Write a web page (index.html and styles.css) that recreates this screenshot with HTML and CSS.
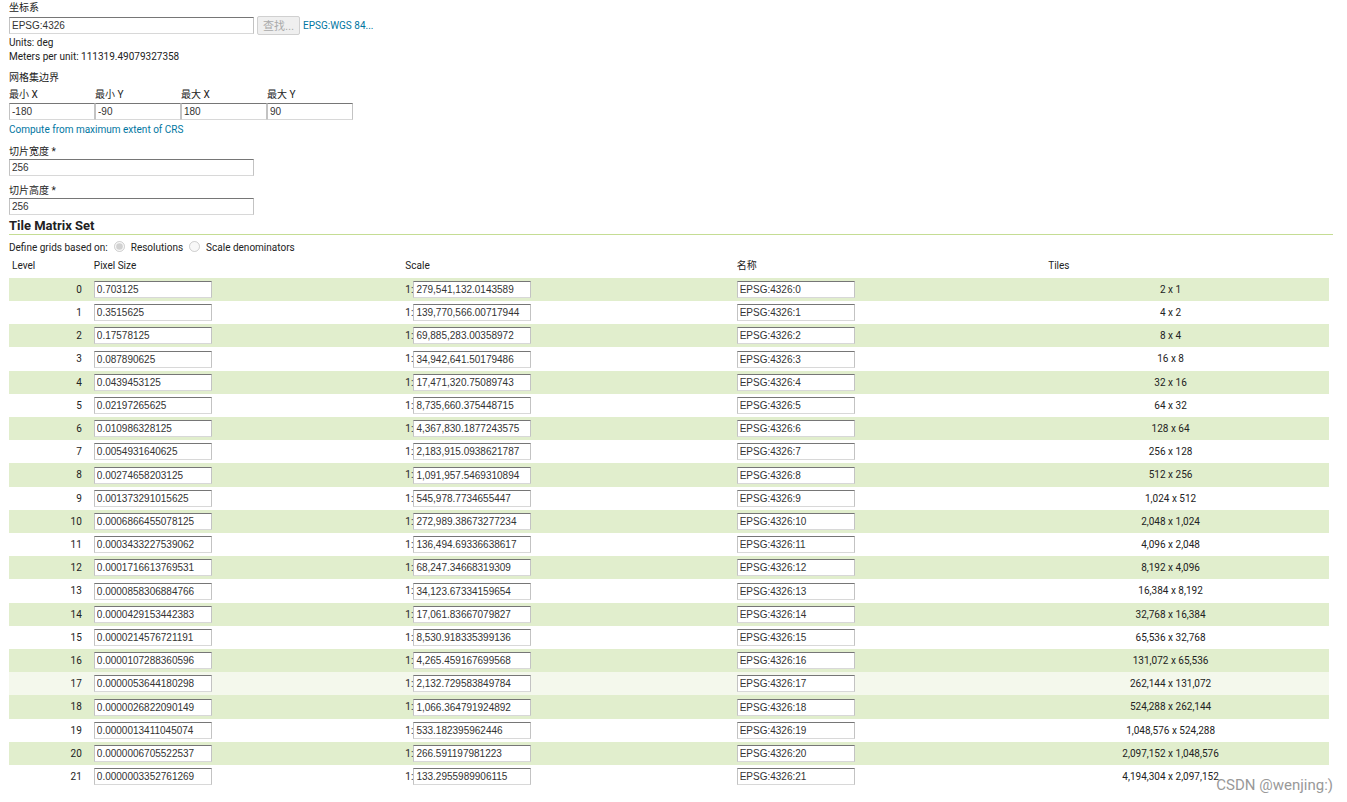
FILE: index.html
```html
<!DOCTYPE html>
<html lang="zh-CN">
<head>
<meta charset="utf-8">
<title>Tile Matrix Set</title>
<link rel="stylesheet" href="styles.css">
</head>
<body>
<form class="gridset">
  <section class="crs">
    <label class="caption" for="crs">坐标系</label>
    <div class="crs-row">
      <input class="field wide" id="crs" type="text" value="EPSG:4326">
      <button class="find" type="button" disabled>查找...</button>
      <a class="link" href="#">EPSG:WGS 84...</a>
    </div>
    <p class="info">Units: deg</p>
    <p class="info">Meters per unit: 111319.49079327358</p>
  </section>
  <fieldset class="bounds">
    <legend class="caption">网格集边界</legend>
    <div class="bounds-row">
      <label class="bound">最小 X<input class="field" type="text" value="-180"></label>
      <label class="bound">最小 Y<input class="field" type="text" value="-90"></label>
      <label class="bound">最大 X<input class="field" type="text" value="180"></label>
      <label class="bound">最大 Y<input class="field" type="text" value="90"></label>
    </div>
    <a class="link compute" href="#">Compute from maximum extent of CRS</a>
  </fieldset>
  <div class="tile-size">
    <label class="caption" for="tw">切片宽度 *</label>
    <input class="field wide" id="tw" type="text" value="256">
  </div>
  <div class="tile-size">
    <label class="caption" for="th">切片高度 *</label>
    <input class="field wide" id="th" type="text" value="256">
  </div>
  <h2 class="title">Tile Matrix Set</h2>
  <div class="basis">
    <span>Define grids based on:</span>
    <input class="radio" id="res" type="radio" name="basis" checked disabled><label for="res">Resolutions</label>
    <input class="radio" id="den" type="radio" name="basis" disabled><label for="den">Scale denominators</label>
  </div>
  <table class="levels">
    <colgroup><col class="c-level"><col class="c-pixel"><col class="c-scale"><col class="c-name"><col class="c-tiles"><col></colgroup>
    <thead>
      <tr><th>Level</th><th>Pixel Size</th><th>Scale</th><th>名称</th><th>Tiles</th><th></th></tr>
    </thead>
    <tbody>
      <tr><td>0</td><td><input class="field" aria-label="Pixel Size" value="0.703125"></td><td><label class="scale">1:<input class="field" value="279,541,132.0143589"></label></td><td><input class="field" aria-label="名称" value="EPSG:4326:0"></td><td>2 x 1</td><td></td></tr>
      <tr><td>1</td><td><input class="field" aria-label="Pixel Size" value="0.3515625"></td><td><label class="scale">1:<input class="field" value="139,770,566.00717944"></label></td><td><input class="field" aria-label="名称" value="EPSG:4326:1"></td><td>4 x 2</td><td></td></tr>
      <tr><td>2</td><td><input class="field" aria-label="Pixel Size" value="0.17578125"></td><td><label class="scale">1:<input class="field" value="69,885,283.00358972"></label></td><td><input class="field" aria-label="名称" value="EPSG:4326:2"></td><td>8 x 4</td><td></td></tr>
      <tr><td>3</td><td><input class="field" aria-label="Pixel Size" value="0.087890625"></td><td><label class="scale">1:<input class="field" value="34,942,641.50179486"></label></td><td><input class="field" aria-label="名称" value="EPSG:4326:3"></td><td>16 x 8</td><td></td></tr>
      <tr><td>4</td><td><input class="field" aria-label="Pixel Size" value="0.0439453125"></td><td><label class="scale">1:<input class="field" value="17,471,320.75089743"></label></td><td><input class="field" aria-label="名称" value="EPSG:4326:4"></td><td>32 x 16</td><td></td></tr>
      <tr><td>5</td><td><input class="field" aria-label="Pixel Size" value="0.02197265625"></td><td><label class="scale">1:<input class="field" value="8,735,660.375448715"></label></td><td><input class="field" aria-label="名称" value="EPSG:4326:5"></td><td>64 x 32</td><td></td></tr>
      <tr><td>6</td><td><input class="field" aria-label="Pixel Size" value="0.010986328125"></td><td><label class="scale">1:<input class="field" value="4,367,830.1877243575"></label></td><td><input class="field" aria-label="名称" value="EPSG:4326:6"></td><td>128 x 64</td><td></td></tr>
      <tr><td>7</td><td><input class="field" aria-label="Pixel Size" value="0.0054931640625"></td><td><label class="scale">1:<input class="field" value="2,183,915.0938621787"></label></td><td><input class="field" aria-label="名称" value="EPSG:4326:7"></td><td>256 x 128</td><td></td></tr>
      <tr><td>8</td><td><input class="field" aria-label="Pixel Size" value="0.00274658203125"></td><td><label class="scale">1:<input class="field" value="1,091,957.5469310894"></label></td><td><input class="field" aria-label="名称" value="EPSG:4326:8"></td><td>512 x 256</td><td></td></tr>
      <tr><td>9</td><td><input class="field" aria-label="Pixel Size" value="0.001373291015625"></td><td><label class="scale">1:<input class="field" value="545,978.7734655447"></label></td><td><input class="field" aria-label="名称" value="EPSG:4326:9"></td><td>1,024 x 512</td><td></td></tr>
      <tr><td>10</td><td><input class="field" aria-label="Pixel Size" value="0.0006866455078125"></td><td><label class="scale">1:<input class="field" value="272,989.38673277234"></label></td><td><input class="field" aria-label="名称" value="EPSG:4326:10"></td><td>2,048 x 1,024</td><td></td></tr>
      <tr><td>11</td><td><input class="field" aria-label="Pixel Size" value="0.0003433227539062"></td><td><label class="scale">1:<input class="field" value="136,494.69336638617"></label></td><td><input class="field" aria-label="名称" value="EPSG:4326:11"></td><td>4,096 x 2,048</td><td></td></tr>
      <tr><td>12</td><td><input class="field" aria-label="Pixel Size" value="0.0001716613769531"></td><td><label class="scale">1:<input class="field" value="68,247.34668319309"></label></td><td><input class="field" aria-label="名称" value="EPSG:4326:12"></td><td>8,192 x 4,096</td><td></td></tr>
      <tr><td>13</td><td><input class="field" aria-label="Pixel Size" value="0.0000858306884766"></td><td><label class="scale">1:<input class="field" value="34,123.67334159654"></label></td><td><input class="field" aria-label="名称" value="EPSG:4326:13"></td><td>16,384 x 8,192</td><td></td></tr>
      <tr><td>14</td><td><input class="field" aria-label="Pixel Size" value="0.0000429153442383"></td><td><label class="scale">1:<input class="field" value="17,061.83667079827"></label></td><td><input class="field" aria-label="名称" value="EPSG:4326:14"></td><td>32,768 x 16,384</td><td></td></tr>
      <tr><td>15</td><td><input class="field" aria-label="Pixel Size" value="0.0000214576721191"></td><td><label class="scale">1:<input class="field" value="8,530.918335399136"></label></td><td><input class="field" aria-label="名称" value="EPSG:4326:15"></td><td>65,536 x 32,768</td><td></td></tr>
      <tr><td>16</td><td><input class="field" aria-label="Pixel Size" value="0.0000107288360596"></td><td><label class="scale">1:<input class="field" value="4,265.459167699568"></label></td><td><input class="field" aria-label="名称" value="EPSG:4326:16"></td><td>131,072 x 65,536</td><td></td></tr>
      <tr class="active"><td>17</td><td><input class="field" aria-label="Pixel Size" value="0.0000053644180298"></td><td><label class="scale">1:<input class="field" value="2,132.729583849784"></label></td><td><input class="field" aria-label="名称" value="EPSG:4326:17"></td><td>262,144 x 131,072</td><td></td></tr>
      <tr><td>18</td><td><input class="field" aria-label="Pixel Size" value="0.0000026822090149"></td><td><label class="scale">1:<input class="field" value="1,066.364791924892"></label></td><td><input class="field" aria-label="名称" value="EPSG:4326:18"></td><td>524,288 x 262,144</td><td></td></tr>
      <tr><td>19</td><td><input class="field" aria-label="Pixel Size" value="0.0000013411045074"></td><td><label class="scale">1:<input class="field" value="533.182395962446"></label></td><td><input class="field" aria-label="名称" value="EPSG:4326:19"></td><td>1,048,576 x 524,288</td><td></td></tr>
      <tr><td>20</td><td><input class="field" aria-label="Pixel Size" value="0.0000006705522537"></td><td><label class="scale">1:<input class="field" value="266.591197981223"></label></td><td><input class="field" aria-label="名称" value="EPSG:4326:20"></td><td>2,097,152 x 1,048,576</td><td></td></tr>
      <tr><td>21</td><td><input class="field" aria-label="Pixel Size" value="0.0000003352761269"></td><td><label class="scale">1:<input class="field" value="133.2955989906115"></label></td><td><input class="field" aria-label="名称" value="EPSG:4326:21"></td><td>4,194,304 x 2,097,152</td><td></td></tr>
    </tbody>
  </table>
</form>
<div class="watermark">CSDN @wenjing:)</div>
</body>
</html>
```
FILE: styles.css
```css
* { box-sizing: border-box; }
body {
  margin: 0;
  background: #fff;
  color: #222;
  font: 10px/14px Tahoma, Roboto, "Noto Sans CJK SC", sans-serif;
}
.gridset { padding: 0 14px 0 9px; }
.caption { display: block; padding: 0; }
.field {
  width: 118px;
  height: 17px;
  margin: 0;
  padding: 0 2px;
  border: 1px solid #c3c3c3;
  border-top-color: #767676;
  border-bottom-color: #d8d8d8;
  background: #fff;
  color: #333;
  font: 10px "Liberation Sans", Arial, sans-serif;
}
.wide { display: block; width: 245px; }
.link { color: #0076a1; text-decoration: none; }
.info { margin: 0; }
.crs { padding-top: 1px; }
.crs-row { display: flex; align-items: center; gap: 3px; height: 21px; }
.find {
  width: 43px;
  height: 19px;
  padding: 0;
  border: 1px solid #d0d0d0;
  border-radius: 2px;
  background: #efefef;
  color: #aaa;
  font: 11px/14px "Liberation Sans", "Noto Sans CJK SC", sans-serif;
}
.bounds { margin: 7px 0 0; padding: 0; border: 0; }
.bounds-row { display: flex; padding-top: 3px; }
.bound { display: flex; flex-direction: column; gap: 1px; width: 86px; }
.bound .field { width: 100%; }
.compute { display: block; margin-top: 3px; }
.tile-size { margin-top: 8px; }
.title {
  margin: 2px 0 0;
  border-bottom: 1px solid #c5dd94;
  font-size: 13px;
  line-height: 17px;
}
.basis { display: flex; align-items: center; margin-top: 5px; height: 16px; }
.radio { width: 11px; height: 11px; margin: 0 6px 4px; }
.levels {
  width: calc(100% - 4px);
  margin-top: 3px;
  border-collapse: collapse;
  table-layout: fixed;
}
.c-level { width: 6.2%; }
.c-pixel { width: 23.6%; }
.c-scale { width: 25.1%; }
.c-name { width: 23.6%; }
.c-tiles { width: 19%; }
.levels th { padding: 0 3px 5px; font-weight: normal; text-align: left; }
.levels td { height: 23px; padding: 0 3px; }
.levels tr:nth-child(5n+4) td { height: 24px; }
.levels tbody tr:nth-child(odd) { background: #e1eecd; }
.levels tbody tr.active { background: #f4f8ec; }
.levels td .field { display: block; }
.levels td:first-child { padding-right: 9px; text-align: right; }
.levels td:nth-child(5) { text-align: center; }
.levels .scale { display: flex; align-items: center; }
.watermark {
  position: absolute;
  right: 14px;
  bottom: 8px;
  color: #999;
  font: 15px/18px Roboto, sans-serif;
}
```
